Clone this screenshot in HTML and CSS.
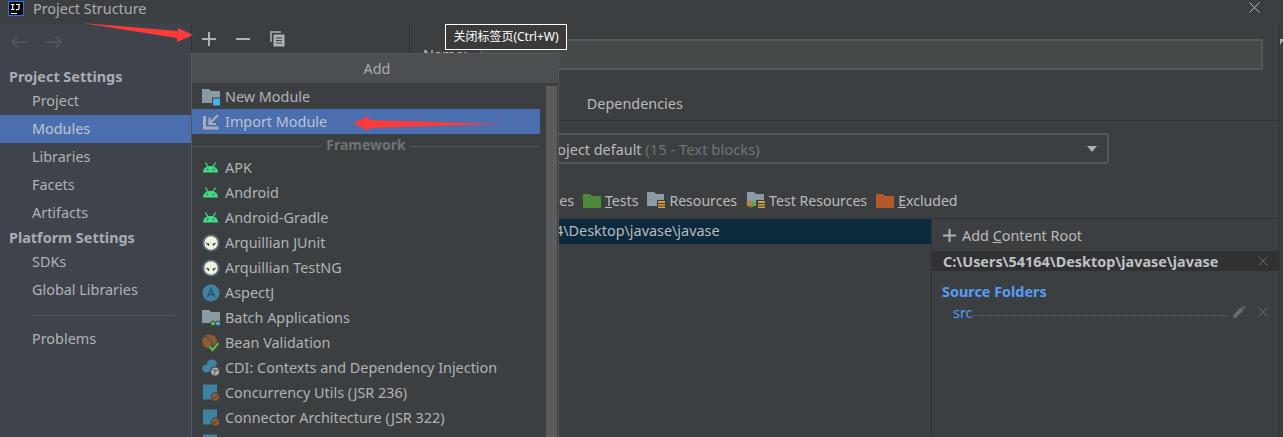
FILE: index.html
```html
<!DOCTYPE html>
<html>
<head lang="en">
    <meta charset="UTF-8">
    <title>Project Structure</title>
    <link rel="stylesheet" href="styles.css">
</head>
<body>
<svg class="defs" width="0" height="0">
    <symbol id="android" viewBox="0 0 18 18"><path d="M1 13.500c0-4.200 3.300-6.500 7.500-6.500s7.500 2.300 7.500 6.500z" fill="#3ddc84"/><path d="M3.500 3.500l2.500 4.500M13.500 3.500L11 8" stroke="#3ddc84" stroke-width="1.300"/><circle cx="5.500" cy="10.500" r=".8" fill="#3c3f41"/><circle cx="11.500" cy="10.500" r=".8" fill="#3c3f41"/></symbol>
    <symbol id="alien" viewBox="0 0 18 18"><circle cx="9" cy="9" r="8.500" fill="#5a7180"/><circle cx="9" cy="9" r="6.700" fill="#eef2de"/><path d="M3.500 8.500l4 1.300-.7 2.500zM14.500 8.500l-4 1.300.7 2.500z" fill="#3c3f41"/></symbol>
    <symbol id="bluebox" viewBox="0 0 18 18"><path d="M1 .5h14v15H1z" fill="#3f83a3"/><circle cx="13.500" cy="13" r="4.300" fill="#8c5a33" stroke="#3c3f41"/><path d="M11 15.500l5-5" stroke="#3c3f41"/></symbol>
</svg>

<div class="titlebar">
    <svg class="ij" width="16" height="15" viewBox="0 0 16 15"><rect x=".5" y=".5" width="15" height="14" fill="#000" stroke="#1e7ce0"/><rect x="3" y="12" width="6" height="1" fill="#fff"/><path d="M3 3.500h3.500M4.700 3.500v5M3 8.500h3.500M8 3.500h4M11 3.500v4.300l-1 .9H8" fill="none" stroke="#fff" stroke-width="1.200"/></svg>
    <span class="title">Project Structure</span>
    <svg class="close" width="11" height="11" viewBox="0 0 11 11"><path d="M.5.500l10 10M10.500.500l-10 10" stroke="#b4b4b4"/></svg>
</div>

<div class="layout">
    <aside class="sidebar">
        <div class="history">
            <svg width="18" height="14" viewBox="0 0 18 14"><path d="M17 7H2M8 1L2 7l6 6" fill="none" stroke="#55585a" stroke-width="1.600"/></svg>
            <svg width="18" height="14" viewBox="0 0 18 14"><path d="M1 7h15M10 1l6 6-6 6" fill="none" stroke="#55585a" stroke-width="1.600"/></svg>
        </div>
        <h3 class="side-head">Project Settings</h3>
        <a class="side-item">Project</a>
        <a class="side-item select">Modules</a>
        <a class="side-item">Libraries</a>
        <a class="side-item">Facets</a>
        <a class="side-item">Artifacts</a>
        <h3 class="side-head side-head2">Platform Settings</h3>
        <a class="side-item">SDKs</a>
        <a class="side-item">Global Libraries</a>
        <div class="side-line"></div>
        <a class="side-item">Problems</a>
    </aside>

    <section class="modules">
        <div class="toolbar">
            <svg width="14" height="14" viewBox="0 0 14 14"><path d="M7 0v14M0 7h14" stroke="#aeb1b3" stroke-width="2"/></svg>
            <svg width="14" height="14" viewBox="0 0 14 14"><path d="M0 7h14" stroke="#aeb1b3" stroke-width="2"/></svg>
            <svg width="16" height="16" viewBox="0 0 16 16"><path d="M1 11V1h10" fill="none" stroke="#aeb1b3" stroke-width="1.500"/><path d="M3.500 3.500h11v12h-11z" fill="#aeb1b3"/><path d="M6 7h6M6 9.500h6M6 12h6" stroke="#3c3f41"/></svg>
        </div>
    </section>

    <section class="detail">
        <div class="name-row">
            <span class="name-label">Name:</span>
            <div class="name-input"></div>
        </div>
        <div class="tabs">
            <span class="tab">Sources</span>
            <span class="tab">Paths</span>
            <span class="tab">Dependencies</span>
        </div>
        <div class="level-row">
            <span class="level-label">Language level:</span>
            <div class="level-select">
                <span>Project default <em>(15 - Text blocks)</em></span>
                <i class="caret"></i>
            </div>
        </div>
        <div class="marks">
            <span class="mark-label">Mark as:</span>
            <span class="mark"><svg width="18" height="15" viewBox="0 0 18 15"><path d="M0 1h7l2 2h9v12H0z" fill="#3f83a3"/></svg><span>Sources</span></span>
            <span class="mark"><svg width="18" height="15" viewBox="0 0 18 15"><path d="M0 1h7l2 2h9v12H0z" fill="#4f8a3c"/></svg><span><u>T</u>ests</span></span>
            <span class="mark"><svg width="18" height="17" viewBox="0 0 18 17"><path d="M0 0h7l2 2h8v12H0z" fill="#8b9aa3"/><path d="M10 8h8v8h-8z" fill="#3c3f41"/><path d="M11 9h7v2h-7zM11 12h7v1.500h-7zM11 14.500h7V16h-7z" fill="#d39b3a"/></svg><span>Resources</span></span>
            <span class="mark"><svg width="19" height="17" viewBox="0 0 19 17"><path d="M1 0h7l2 2h8v12H1z" fill="#8b9aa3"/><path d="M10 8h9v8h-9z" fill="#3c3f41"/><path d="M12 9h7v2h-7zM12 12h7v1.500h-7zM12 14.500h7V16h-7z" fill="#d39b3a"/><path d="M4.500 8L0 12l4.500 4z" fill="#e0702b"/><path d="M5.500 8L10 12l-4.500 4z" fill="#4fa83d"/></svg><span>Test Resources</span></span>
            <span class="mark"><svg width="18" height="15" viewBox="0 0 18 15"><path d="M0 1h7l2 2h9v12H0z" fill="#b5582a"/></svg><span><u>E</u>xcluded</span></span>
        </div>
        <div class="content">
            <div class="tree">
                <div class="tree-row">C:\Users\54164\Desktop\javase\javase</div>
            </div>
            <div class="roots">
                <div class="add-root">
                    <svg width="13" height="13" viewBox="0 0 13 13"><path d="M6.500 0v13M0 6.500h13" stroke="#aeb1b3" stroke-width="2"/></svg>
                    <span>Add <u>C</u>ontent Root</span>
                </div>
                <div class="root-head">
                    <span>C:\Users\54164\Desktop\javase\javase</span>
                    <svg class="x" width="10" height="10" viewBox="0 0 10 10"><path d="M.5.500l9 9M9.500.500l-9 9" stroke="#686b6d"/></svg>
                </div>
                <div class="folders-head">Source Folders</div>
                <div class="folder">
                    <span>src</span>
                    <span class="dots"></span>
                    <svg class="pen" width="14" height="14" viewBox="0 0 14 14"><path d="M1 13l.7-3.500 7-7 2.800 2.800-7 7zM9.700 1.500l1-1 2.800 2.800-1 1z" fill="#686b6d"/></svg>
                    <svg class="x" width="10" height="10" viewBox="0 0 10 10"><path d="M.5.500l9 9M9.500.500l-9 9" stroke="#686b6d"/></svg>
                </div>
            </div>
        </div>
    </section>
    <div class="edge"></div>
</div>

<div class="popup">
    <div class="popup-title">Add</div>
    <div class="popup-body">
        <div class="row"><svg width="18" height="18" viewBox="0 0 18 18"><path d="M0 1h7l2 2h9v12H0z" fill="#8b9aa3"/><path d="M10 9.500h9v9h-9z" fill="#3c3f41"/><path d="M11 10.500h7v7h-7z" fill="#40b6e0"/></svg><span>New Module</span></div>
        <div class="row select"><svg width="18" height="18" viewBox="0 0 18 18"><path d="M2.500 3v12h14" fill="none" stroke="#a8adbd" stroke-width="3"/><path d="M16 2L8 10M7.500 4.500V11H14" fill="none" stroke="#a8adbd" stroke-width="2.200"/></svg><span>Import Module</span></div>
        <div class="sep"><span>Framework</span></div>
        <div class="row"><svg width="18" height="18"><use href="#android"/></svg><span>APK</span></div>
        <div class="row"><svg width="18" height="18"><use href="#android"/></svg><span>Android</span></div>
        <div class="row"><svg width="18" height="18"><use href="#android"/></svg><span>Android-Gradle</span></div>
        <div class="row"><svg width="18" height="18"><use href="#alien"/></svg><span>Arquillian JUnit</span></div>
        <div class="row"><svg width="18" height="18"><use href="#alien"/></svg><span>Arquillian TestNG</span></div>
        <div class="row"><svg width="18" height="18" viewBox="0 0 18 18"><circle cx="9" cy="9" r="8.500" fill="#3f83a3"/><path d="M5.500 13L9 5l3.500 8M7 10.500h4" fill="none" stroke="#2b4f62" stroke-width="1.500"/></svg><span>AspectJ</span></div>
        <div class="row"><svg width="18" height="18" viewBox="0 0 18 18"><path d="M0 1h7l2 2h9v11H0z" fill="#8b9aa3"/><circle cx="11" cy="14.500" r="2.500" fill="#62b543" stroke="#3c3f41"/><circle cx="16" cy="14.500" r="2.500" fill="#40b6e0" stroke="#3c3f41"/></svg><span>Batch Applications</span></div>
        <div class="row"><svg width="18" height="18" viewBox="0 0 18 18"><ellipse cx="7.500" cy="7.500" rx="7.500" ry="7" fill="#8c5a33"/><path d="M2 2c6 2 9 6 9 12" fill="none" stroke="#3c3f41"/><path d="M7 12l3.500 4 6-7" fill="none" stroke="#3c3f41" stroke-width="4"/><path d="M7 12l3.500 4 6-7" fill="none" stroke="#62b543" stroke-width="2.200"/></svg><span>Bean Validation</span></div>
        <div class="row"><svg width="20" height="20" viewBox="0 0 20 20"><ellipse cx="11" cy="5" rx="5.500" ry="4.500" fill="#3f83a3"/><ellipse cx="5" cy="10.500" rx="4.800" ry="4.500" fill="#3f83a3"/><circle cx="14.500" cy="14" r="5" fill="#aeb1b3" stroke="#3c3f41"/><path d="M11 13c2-2 5 0 7 0M13 18l2-5" fill="none" stroke="#3c3f41"/></svg><span>CDI: Contexts and Dependency Injection</span></div>
        <div class="row"><svg width="18" height="18"><use href="#bluebox"/></svg><span>Concurrency Utils (JSR 236)</span></div>
        <div class="row"><svg width="18" height="18"><use href="#bluebox"/></svg><span>Connector Architecture (JSR 322)</span></div>
        <div class="row"><svg width="18" height="18"><use href="#bluebox"/></svg></div>
    </div>
    <div class="scroll"></div>
</div>

<div class="tooltip">关闭标签页(Ctrl+W)</div>

<svg class="arrows" width="520" height="140" viewBox="0 0 520 140">
    <path d="M82 23L178 31 178 28 193 35 177 42 177 38z" fill="#fb3a3a"/>
    <path d="M502 124L369 120 369 116 353 123 369 131 369 128z" fill="#fb3a3a"/>
</svg>
</body>
</html>
```

FILE: styles.css
```css
*{
    margin: 0;
    padding: 0;
    box-sizing: border-box;
}
html,body{
    height: 100%;
    overflow: hidden;
}
body{
    position: relative;
    background-color: #3c3f41;
    color: #bbbbbb;
    font-family: "Noto Sans", "Noto Sans CJK SC", sans-serif;
    font-size: 14.4px;
}
u{
    text-decoration: underline;
}
.defs{
    display: block;
}

/* title bar */
.titlebar{
    height: 24px;
    display: flex;
    align-items: center;
    padding: 0 23px 7px 8px;
}
.title{
    margin-left: 9px;
    color: #a9adb0;
}
.close{
    margin-left: auto;
    margin-top: -2px;
}

/* left column */
.layout{
    display: flex;
    height: 413px;
    position: relative;
}
.sidebar{
    width: 192px;
    flex-shrink: 0;
    background-color: #3e434c;
    border-right: 1px solid #2f3133;
}
.history{
    height: 36px;
    display: flex;
    align-items: center;
    gap: 17px;
    padding: 0 0 0 10px;
}
.side-head{
    height: 21px;
    line-height: 21px;
    padding-left: 9px;
    margin-top: 6px;
    font-size: 14.4px;
    font-weight: 700;
    color: #a9adb0;
}
.side-head2{
    margin-top: 0;
}
.side-item{
    display: block;
    height: 28px;
    line-height: 27px;
    padding-left: 32px;
    color: #b0b3b5;
}
.side-item.select{
    background-color: #4b6eaf;
    color: #c0c6d0;
}
.side-line{
    height: 1px;
    margin: 11px 16px 9px 32px;
    background-color: #50545a;
}

/* module tree column */
.modules{
    width: 218px;
    flex-shrink: 0;
    border-right: 1px solid #323537;
}
.toolbar{
    height: 29px;
    display: flex;
    align-items: center;
    gap: 20px;
    padding: 1px 0 0 10px;
}

/* module details */
.detail{
    flex: 1;
    min-width: 0;
}
.name-row{
    height: 62px;
    display: flex;
    align-items: center;
    padding: 0 16px 0 13px;
}
.name-label{
    width: 57px;
    margin-top: -1px;
}
.name-input{
    flex: 1;
    height: 31px;
    margin-top: -2px;
    background-color: #45494a;
    border: 2px solid #55585a;
}
.tabs{
    height: 35px;
    display: flex;
    align-items: center;
    gap: 37px;
    padding-left: 12px;
    border-bottom: 1px solid #323537;
}
.level-row{
    height: 43px;
    display: flex;
    align-items: center;
    padding: 12px 0 0 13px;
}
.level-label{
    width: 101px;
    white-space: nowrap;
}
.level-select{
    width: 585px;
    height: 31px;
    display: flex;
    align-items: center;
    justify-content: space-between;
    padding: 0 10px 0 17px;
    border: 2px solid #55585a;
    border-radius: 3px;
}
.level-select em{
    font-style: normal;
    font-size: 14.8px;
    color: #6f7375;
}
.caret{
    width: 0;
    height: 0;
    border-left: 5px solid transparent;
    border-right: 5px solid transparent;
    border-top: 6px solid #aeb1b3;
}
.marks{
    height: 54px;
    display: flex;
    align-items: center;
    padding: 18px 0 0 13px;
    font-size: 14.1px;
    white-space: nowrap;
}
.mark-label{
    width: 77px;
}
.mark{
    display: flex;
    align-items: center;
    gap: 4px;
    margin-right: 9px;
}
.content{
    display: flex;
    height: 240px;
    border-top: 1px solid #323537;
}
.tree{
    width: 521px;
    flex-shrink: 0;
}
.tree-row{
    height: 25px;
    line-height: 24px;
    padding-left: 50px;
    background-color: #0d293e;
    color: #b8bcbf;
}
.roots{
    flex: 1;
    border-left: 1px solid #323537;
}
.add-root{
    height: 32px;
    display: flex;
    align-items: center;
    gap: 6px;
    padding: 1px 0 0 11px;
}
.root-head{
    height: 20px;
    display: flex;
    align-items: center;
    justify-content: space-between;
    padding: 0 11px 0 11px;
    background-color: #2f3133;
    font-weight: 700;
    color: #bfc2c4;
}
.folders-head{
    height: 20px;
    line-height: 20px;
    margin-top: 11px;
    padding-left: 10px;
    font-weight: 700;
    color: #589df6;
}
.folder{
    height: 20px;
    display: flex;
    align-items: center;
    padding: 0 11px 0 21px;
    color: #589df6;
}
.dots{
    flex: 1;
    margin-top: 6px;
    border-bottom: 1px dotted #686b6d;
}
.pen{
    margin: 0 12px 0 4px;
}
.edge{
    width: 4px;
    flex-shrink: 0;
    background-color: #3a3d3f;
    border-left: 1px solid #323537;
    position: relative;
}
.edge:before{
    content: "";
    position: absolute;
    left: 0;
    top: 15px;
    border-top: 6px solid #aeb1b3;
    border-right: 4px solid transparent;
}

/* add menu */
.popup{
    position: absolute;
    left: 191px;
    top: 53px;
    width: 368px;
    height: 384px;
    background-color: #3c3f41;
    border: 1px solid #55585a;
    border-bottom: none;
    overflow: hidden;
}
.popup-title{
    height: 29px;
    line-height: 29px;
    padding-left: 4px;
    text-align: center;
    background-color: #4b4f52;
    color: #a9adb0;
}
.popup-body{
    margin-top: 1px;
    width: 348px;
}
.row{
    height: 25px;
    display: flex;
    align-items: center;
    gap: 5px;
    padding-left: 10px;
    line-height: 24px;
    color: #b0b3b5;
    white-space: nowrap;
}
.row svg{
    width: 18px;
    flex-shrink: 0;
    overflow: visible;
}
.row.select{
    background-color: #4b6eaf;
    color: #bcc3d0;
}
.sep{
    height: 21px;
    display: flex;
    align-items: center;
    justify-content: center;
    font-size: 14px;
    font-weight: 700;
    color: #6f7375;
    position: relative;
}
.sep:before{
    content: "";
    position: absolute;
    left: 0;
    right: 0;
    top: 12px;
    border-top: 1px solid #515456;
}
.sep span{
    position: relative;
    background-color: #3c3f41;
    padding: 0 3px;
}
.scroll{
    position: absolute;
    right: 1px;
    top: 32px;
    bottom: 0;
    width: 11px;
    background-color: #5a5c5e;
}

/* overlays */
.tooltip{
    position: absolute;
    left: 445px;
    top: 24px;
    width: 122px;
    height: 26px;
    line-height: 24px;
    text-align: center;
    font-size: 12px;
    color: #ffffff;
    background-color: #3a3a3a;
    border: 1px solid #ffffff;
    white-space: nowrap;
}
.arrows{
    position: absolute;
    left: 0;
    top: 0;
}
```
